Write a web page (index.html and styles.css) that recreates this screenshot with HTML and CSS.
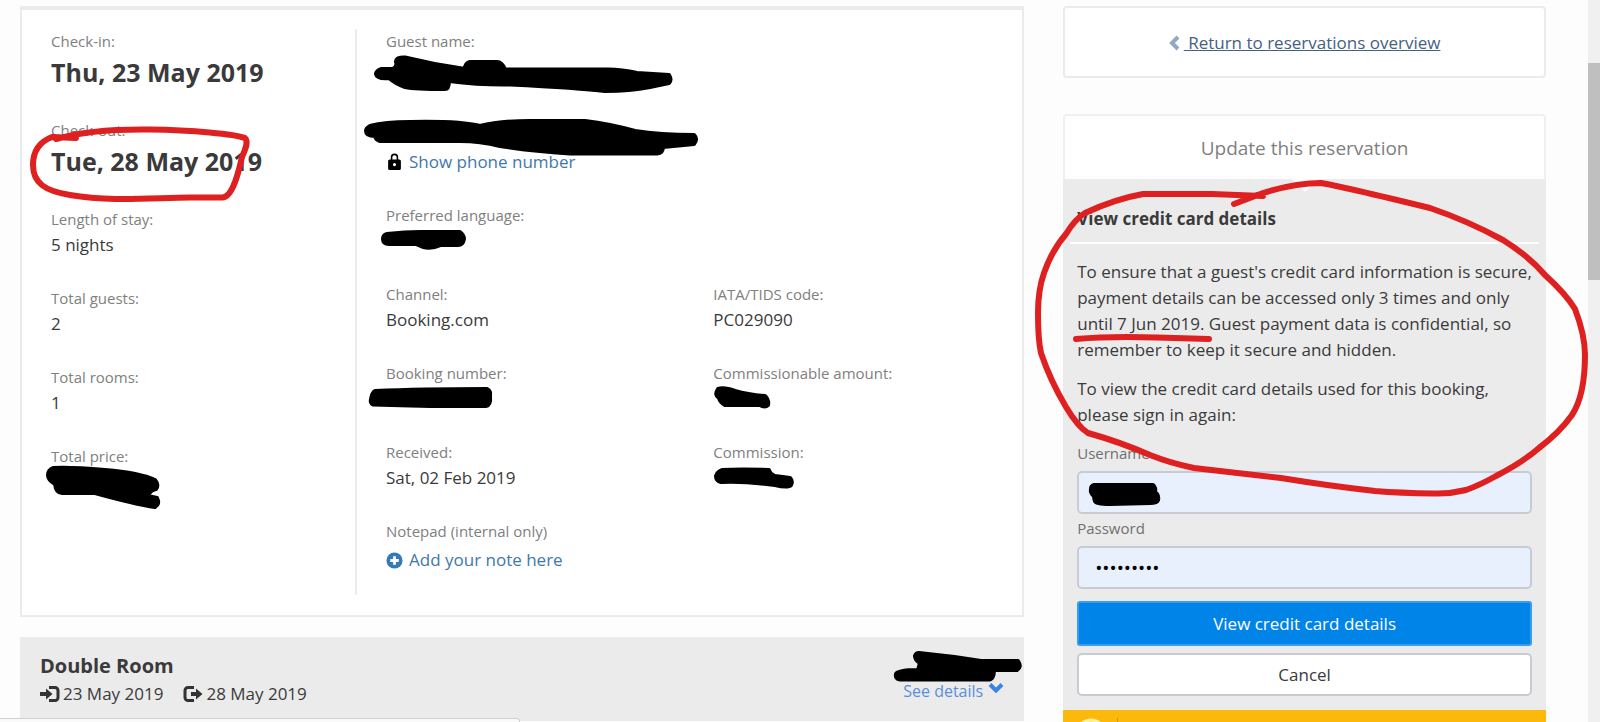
FILE: index.html
```html
<!DOCTYPE html>
<html lang="en">
<head>
    <meta charset="utf-8">
    <title>Reservation details</title>
    <link rel="stylesheet" href="styles.css">
</head>
<body>
    <div class="page">
        <!-- Reservation -->
        <main>
            <section class="reservation">
                <div class="stay">
                    <div class="item">
                        <div class="label">Check-in:</div>
                        <div class="value big">Thu, 23 May 2019</div>
                    </div>
                    <div class="item">
                        <div class="label">Check-out:</div>
                        <div class="value big">Tue, 28 May 2019</div>
                    </div>
                    <div class="item">
                        <div class="label">Length of stay:</div>
                        <div class="value">5 nights</div>
                    </div>
                    <div class="item">
                        <div class="label">Total guests:</div>
                        <div class="value">2</div>
                    </div>
                    <div class="item">
                        <div class="label">Total rooms:</div>
                        <div class="value">1</div>
                    </div>
                    <div class="item">
                        <div class="label">Total price:</div>
                        <div class="value"></div>
                    </div>
                </div>

                <div class="guest">
                    <div class="item wide">
                        <div class="label">Guest name:</div>
                        <div class="value big"></div>
                    </div>
                    <div class="item wide contact">
                        <div class="email"></div>
                        <a href="#" class="icon-link">
                            <svg class="lock" viewBox="0 0 12 16"><path d="M1.5 6H2.500V4a3.500 3.500 0 0 1 7 0v2h1A1.500 1.500 0 0 1 12 7.500v7a1.500 1.500 0 0 1-1.500 1.500h-9A1.500 1.500 0 0 1 0 14.500v-7A1.500 1.500 0 0 1 1.500 6zM4 6h4V4a2 2 0 0 0-4 0zM6 9.400a1.500 1.500 0 1 0 0 3 1.500 1.500 0 0 0 0-3z" fill="#000" fill-rule="evenodd"/></svg>
                            Show phone number
                        </a>
                    </div>
                    <div class="item wide">
                        <div class="label">Preferred language:</div>
                        <div class="value"></div>
                    </div>
                    <div class="item">
                        <div class="label">Channel:</div>
                        <div class="value">Booking.com</div>
                    </div>
                    <div class="item">
                        <div class="label">IATA/TIDS code:</div>
                        <div class="value">PC029090</div>
                    </div>
                    <div class="item">
                        <div class="label">Booking number:</div>
                        <div class="value"></div>
                    </div>
                    <div class="item">
                        <div class="label">Commissionable amount:</div>
                        <div class="value"></div>
                    </div>
                    <div class="item">
                        <div class="label">Received:</div>
                        <div class="value">Sat, 02 Feb 2019</div>
                    </div>
                    <div class="item">
                        <div class="label">Commission:</div>
                        <div class="value"></div>
                    </div>
                    <div class="item wide note">
                        <div class="label">Notepad (internal only)</div>
                        <a href="#" class="icon-link">
                            <svg class="plus" viewBox="0 0 18 18"><circle cx="9" cy="9" r="8.500" fill="#337ab7"/><path d="M9 4.500v9M4.500 9h9" stroke="#fff" stroke-width="3"/></svg>
                            Add your note here
                        </a>
                    </div>
                </div>
            </section>

            <section class="room">
                <div>
                    <h2>Double Room</h2>
                    <div class="dates">
                        <span>
                            <svg viewBox="0 0 20 18"><path d="M9 2.500h6a3 3 0 0 1 3 3v7a3 3 0 0 1-3 3H9" fill="none" stroke="#333" stroke-width="3"/><path d="M0 7h6V3.500L12.500 9 6 14.500V11H0z" fill="#333"/></svg>
                            23 May 2019
                        </span>
                        <span>
                            <svg viewBox="0 0 20 18"><path d="M11 2.500H5a3 3 0 0 0-3 3v7a3 3 0 0 0 3 3h6" fill="none" stroke="#333" stroke-width="3"/><path d="M8 7h5V3.500L19.500 9 13 14.500V11H8z" fill="#333"/></svg>
                            28 May 2019
                        </span>
                    </div>
                </div>
                <a href="#" class="see-details">
                    See details
                    <svg viewBox="0 0 16 12"><path d="M2 2.500l6 6 6-6" fill="none" stroke="#3b82e6" stroke-width="4"/></svg>
                </a>
            </section>
        </main>

        <!-- Sidebar -->
        <aside>
            <div class="return">
                <svg viewBox="0 0 11 16"><path d="M9 2L3 8l6 6" fill="none" stroke="#8fa9c4" stroke-width="4"/></svg>
                <a href="#">&nbsp;Return to reservations overview</a>
            </div>

            <div class="update">
                <div class="update-header">Update this reservation</div>
                <form class="card-form">
                    <h3>View credit card details</h3>
                    <div class="fields">
                        <p>To ensure that a guest's credit card information is secure, payment details can be accessed only 3 times and only until 7 Jun 2019. Guest payment data is confidential, so remember to keep it secure and hidden.</p>
                        <p>To view the credit card details used for this booking, please sign in again:</p>
                        <label for="username">Username</label>
                        <input type="text" id="username">
                        <label for="password">Password</label>
                        <input type="password" id="password" value="123456789">
                        <button type="button" class="primary">View credit card details</button>
                        <button type="button">Cancel</button>
                    </div>
                </form>
                <div class="notice">
                    <svg viewBox="0 0 32 32"><circle cx="16" cy="16" r="14" fill="#fdd835" stroke="#fff3a0" stroke-width="3"/></svg>
                    <div class="notice-text"></div>
                </div>
            </div>
        </aside>
    </div>

    <div class="scrollbar"><div class="thumb"></div></div>
    <div class="status"></div>

    <!-- Pen marks drawn over the page -->
    <svg class="marks" viewBox="0 0 1600 722">
        <g class="ink">
            <path d="M381 69Q376 71 376 74Q377 79 389 78Q396 84 405 87Q415 89 445 89Q449 89 449 81Q480 85 510 84.500Q580 88 605 91Q630 91 650 87L669 83Q672 80 669 75L637 73Q620 69 605 69.500H505Q502 62 497 62H470Q465 63 465 69Q435 65 405 57.500Q396 57 396 62Q398 66 393 69Z"/>
            <path d="M370 126Q385 122 410 122Q460 121 480 126Q500 121 530 121H585Q610 124 635 131Q660 135 694 135Q698 139 694 144L663 147Q663 153 657 153.500H570Q530 151 500 146Q480 141 460 141H380Q376 140 375 136Q366 136 366 131Q366 128 370 126Z"/>
            <path d="M387 234Q405 232 420 232H460Q464 235 464 239Q463 245 458 245H441Q432 249 423 247L416 244H389Q383 244 383 239Q383 235 387 234Z"/>
            <path d="M375 391Q420 389 487 389Q491 391 490 396Q491 405 486 406H430Q400 405 373 404.500Q370 403 371 399Q372 393 375 391Z"/>
            <path d="M718 389Q724 387 735 391Q748 395 765 396Q769 400 768 405Q765 408 760 405Q740 405 725 405Q720 402 719 398Q714 395 718 389Z"/>
            <path d="M722 470Q740 469 769 470Q770 474 775 476L790 478Q793 481 791 485Q788 488 775 485Q745 481 721 482Q716 481 716 476Q717 472 722 470Z"/>
            <path d="M53 468Q70 467 105 470Q140 473 155 480Q159 485 156 489Q150 490 148 496L157 498Q160 504 155 507Q135 504 95 493H62Q56 493 55 484Q48 480 48 475Q48 470 53 468Z"/>
            <path d="M919 653Q950 656 981 661H1018Q1022 667 1017 670H994Q994 680 988 679.500H900Q895 679 896 674Q897 670 918 670L920 663Q915 660 915 656Q916 653 919 653Z"/>
            <path d="M1094 485H1153Q1156 488 1155 492Q1159 495 1158 500Q1157 503 1150 503L1110 504Q1096 504 1095 501Q1094 498 1094 496Q1090 493 1091 489Q1091 486 1094 485Z"/>
        </g>
        <g class="red">
            <path d="M76 138L52 137C39 142 33 151 33 165C33 183 45 191 70 195C110 202 150 198 190 197.500H222C233 198 239 170 242 157C247 146 248 141 245 138C235 134 192 130 150 129.500C110 129 80 132 56 139"/>
            <path d="M1234 204L1263 193Q1295 183 1321 183Q1340 186 1430 208Q1468 221 1503 240Q1530 257 1545 275Q1566 294 1575 309Q1585 335 1585 355Q1585 395 1572 415Q1560 432 1539 448Q1523 462 1496 476Q1480 485 1466 490Q1450 494 1434 493.500Q1400 493 1375 491Q1330 486 1281 478Q1230 472 1194 468Q1170 463 1150 455Q1120 442 1088 433Q1078 427 1066 407Q1050 380 1041 353Q1038 340 1038 313Q1038 290 1044 273Q1052 250 1066 234Q1075 219 1085 213Q1115 199 1143 194H1212L1263 196"/>
            <path d="M1076 339Q1110 336 1157 337.500L1209 339"/>
        </g>
    </svg>
</body>
</html>
```

FILE: styles.css
```css
* {
    box-sizing: border-box;
}

body {
    margin: 0;
    height: 100vh;
    overflow: hidden;
    position: relative;
    background: #fdfdfd;
    color: #3a3a3a;
    font-family: "Open Sans", "Noto Sans", sans-serif;
    font-size: 17px;
    line-height: 26px;
}

a {
    color: #4078ab;
    text-decoration: none;
}

.page {
    display: grid;
    grid-template-columns: 2.08fr 1fr;
    gap: 39px;
    align-items: start;
    padding: 6px 54px 0 20px;
}

/* Reservation details */
.reservation {
    display: flex;
    padding: 19px 30px 20px 0;
    background: #fff;
    border: 2px solid #ebebeb;
    border-top-width: 4px;
    margin-bottom: 20px;
}

.stay {
    width: 335px;
    padding-left: 29px;
    border-right: 2px solid #ebebeb;
}

.guest {
    flex: 1;
    display: grid;
    grid-template-columns: 54fr 46fr;
    padding-left: 29px;
}

.item {
    margin-bottom: 27px;
}

.wide {
    grid-column: 1 / 3;
}

.label {
    color: #808080;
    font-size: 15px;
    line-height: 24px;
}

.value {
    height: 28px;
    line-height: 28px;
}

.big {
    height: 38px;
    font-size: 25px;
    font-weight: bold;
    line-height: 38px;
}

.email {
    height: 29px;
}

.icon-link {
    display: flex;
    align-items: center;
    gap: 6px;
    line-height: 29px;
}

.icon-link svg {
    width: 17px;
    height: 17px;
}

.note {
    margin-bottom: 18px;
}

.note .icon-link {
    line-height: 34px;
}

/* Room */
.room {
    display: flex;
    justify-content: space-between;
    align-items: flex-end;
    padding: 14px 20px 13px;
    background: #ebebeb;
}

.room h2 {
    margin: 0;
    font-size: 20px;
    line-height: 29px;
}

.dates {
    display: flex;
    gap: 20px;
    line-height: 28px;
}

.dates span {
    display: flex;
    align-items: center;
    gap: 3px;
}

.dates svg {
    width: 20px;
    height: 18px;
}

.see-details {
    display: flex;
    align-items: center;
    gap: 5px;
    color: #5a8fdc;
    font-size: 16px;
    line-height: 34px;
}

.see-details svg {
    width: 16px;
    height: 12px;
    margin-bottom: 6px;
}

/* Sidebar */
.return {
    display: flex;
    justify-content: center;
    align-items: center;
    gap: 4px;
    padding: 22px 22px 20px;
    margin-bottom: 36px;
    background: #fff;
    border: 2px solid #ebebeb;
    border-radius: 4px;
}

.return a {
    color: #466080;
    text-decoration: underline;
}

.return svg {
    width: 11px;
    height: 16px;
}

.update-header {
    position: relative;
    padding: 18px 0 17px;
    background: #fff;
    border: 2px solid #f0f0f0;
    border-bottom: 0;
    border-radius: 4px 4px 0 0;
    color: #808080;
    font-size: 19px;
    line-height: 28px;
    text-align: center;
}

.update-header::after {
    content: "";
    position: absolute;
    top: 100%;
    left: 50%;
    margin-left: -13px;
    border: 13px solid transparent;
    border-top-color: #fff;
    border-bottom: 0;
}

.card-form {
    padding: 27px 0 14px;
    background: #ebebeb;
}

.card-form h3 {
    margin: 0 7px;
    padding: 0 7px 10px;
    border-bottom: 2px solid #fff;
    font-size: 17px;
    line-height: 26px;
}

.fields {
    display: flex;
    flex-direction: column;
    padding: 15px 14px 0;
}

.fields p {
    margin: 0 0 13px;
}

.fields label {
    margin-bottom: 6px;
    color: #707070;
    font-size: 15px;
    line-height: 24px;
}

.fields input,
.fields button {
    height: 43px;
    padding: 0 16px;
    border: 2px solid #c8ccd2;
    border-radius: 5px;
    background: #e8f0fe;
    color: #000;
    font: inherit;
}

.fields input {
    margin-bottom: 2px;
}

.fields input[type="password"] {
    font-size: 19px;
}

.fields button {
    background: #fff;
    color: #3a3a3a;
}

.fields .primary {
    height: 45px;
    margin: 10px 0 7px;
    border-color: #3a9bf0;
    border-radius: 3px;
    background: #0084e8;
    color: #fff;
}

.notice {
    display: flex;
    gap: 10px;
    height: 60px;
    padding: 8px 12px;
    background: #fdb90b;
}

.notice svg {
    width: 32px;
    height: 32px;
}

.notice-text {
    flex: 1;
    border-left: 1px solid #c99a1c;
}

/* Window edges */
.scrollbar {
    position: fixed;
    top: 0;
    right: 0;
    bottom: 0;
    width: 12px;
    padding-top: 63px;
    background: #f0f0f0;
}

.thumb {
    height: 33%;
    background: #bfbfbf;
}

.status {
    position: fixed;
    left: 0;
    bottom: 0;
    width: 520px;
    height: 4px;
    background: #fafafa;
    border-top: 1px solid #d0d0d0;
    border-right: 1px solid #d0d0d0;
    border-top-right-radius: 4px;
}

.marks {
    position: absolute;
    top: 0;
    left: 0;
    width: 100%;
    pointer-events: none;
}

.ink {
    fill: #000;
    stroke: #000;
    stroke-width: 4px;
    stroke-linejoin: round;
}

.red {
    fill: none;
    stroke: #de2020;
    stroke-width: 6px;
    stroke-linecap: round;
    stroke-linejoin: round;
}
```
